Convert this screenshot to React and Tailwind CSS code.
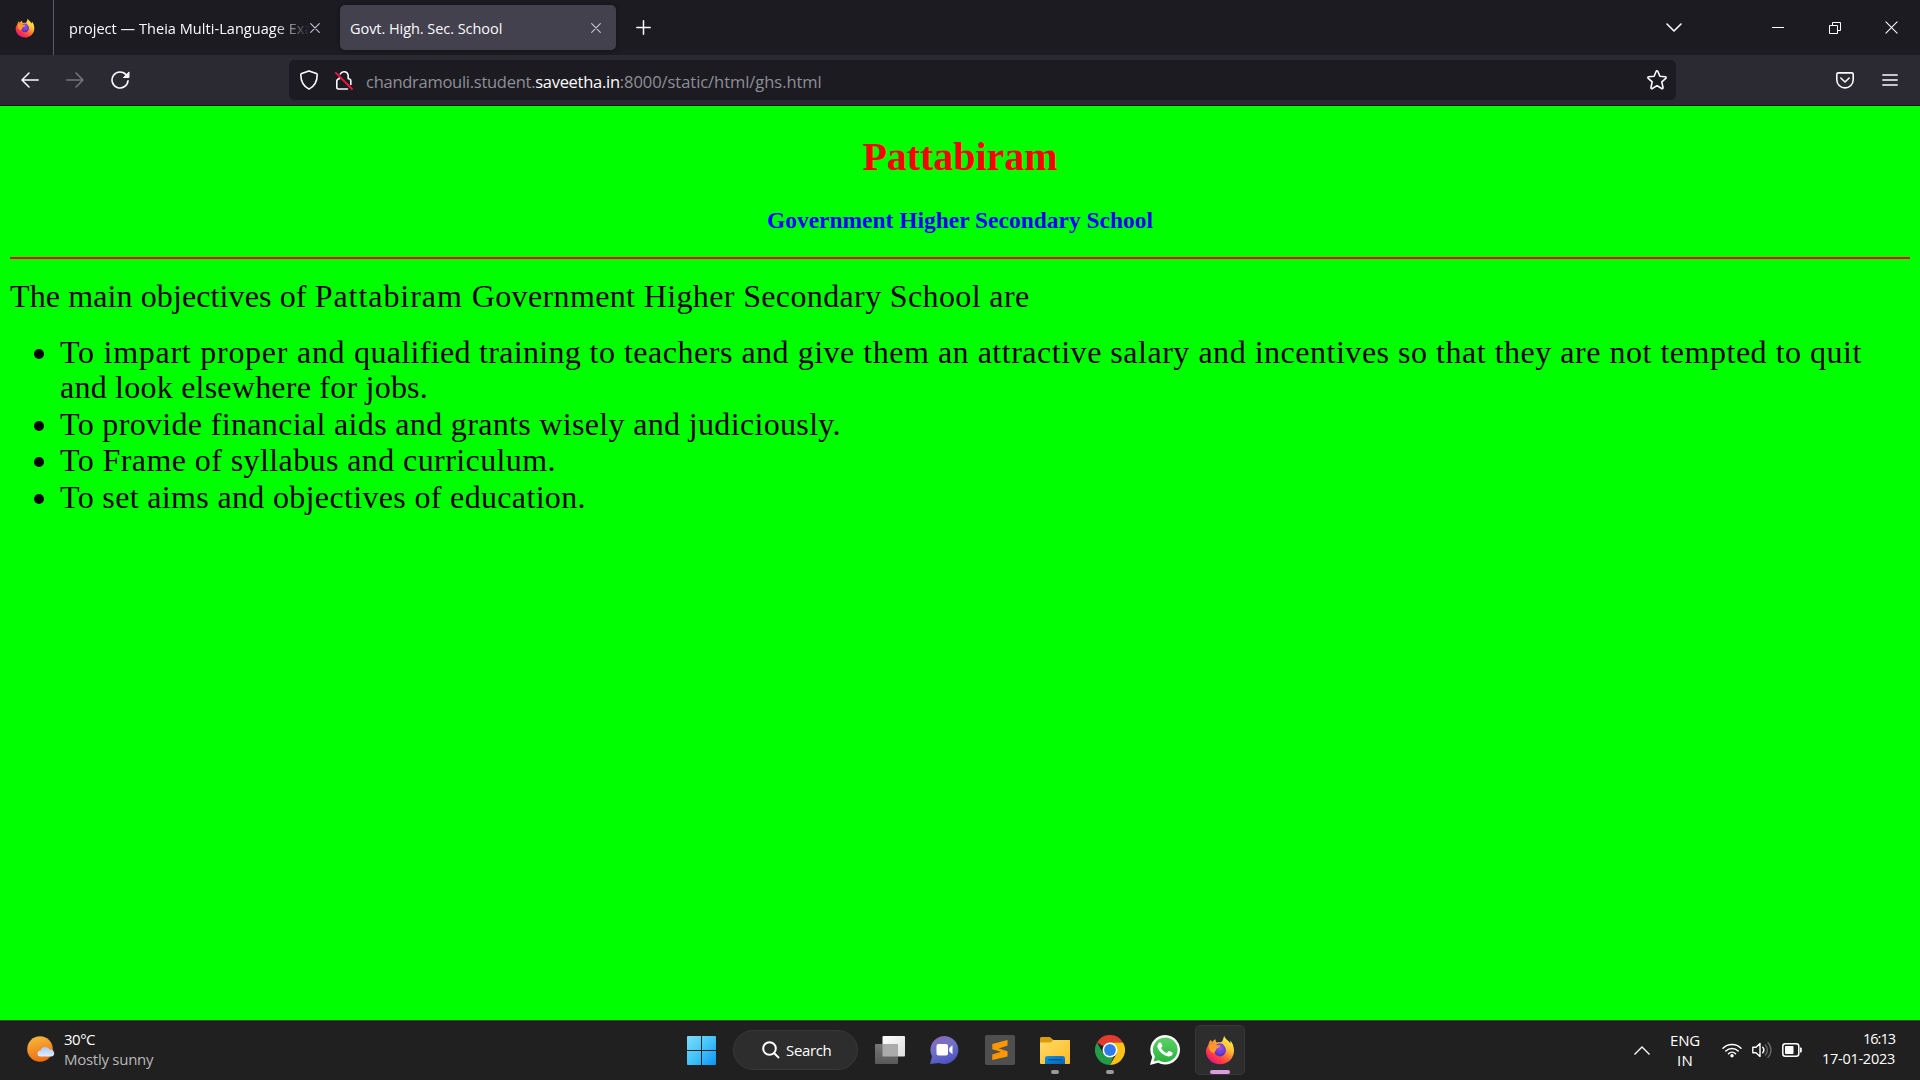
function Firefox({ className, id }) {
  return (
    <svg viewBox="0 0 30 30" className={className}>
      <defs>
        <linearGradient id={id + "a"} x1="0.85" y1="0.1" x2="0.25" y2="0.95">
          <stop offset="0" stopColor="#fff44f" />
          <stop offset="0.3" stopColor="#ffc233" />
          <stop offset="0.55" stopColor="#ff7139" />
          <stop offset="0.8" stopColor="#ff3647" />
          <stop offset="1" stopColor="#e31587" />
        </linearGradient>
        <radialGradient id={id + "b"} cx="0.5" cy="0.35" r="0.65">
          <stop offset="0" stopColor="#a74be8" />
          <stop offset="0.6" stopColor="#6e3fd8" />
          <stop offset="1" stopColor="#4a2fae" />
        </radialGradient>
      </defs>
      <path d="M19.2 0.8c-1 2.400-0.900 4.200-2.300 5.900-1.200 0.600-3.200 0.200-5.100 0.900-1-0.800-1.400-2-1.200-3.400-1.500 0.600-2.500 1.600-3.300 2.700-0.700-0.300-1.100-0.800-1.300-2.100-1.900 1.400-2.400 3.400-2.600 5.400C1.800 12.300 1 14.200 1 16.200 1 23.500 7.300 29.300 15 29.300s14-5.900 14-13.600c0-4.800-1.800-8.400-3.800-10.300 0.300 1.200 0.300 2.100 0.100 3C23.500 5 20 4.400 19.200 0.800z" fill={"url(#" + id + "a)"} />
      <ellipse cx="15" cy="14.800" rx="6" ry="6.600" fill={"url(#" + id + "b)"} />
      <path d="M3.500 10c2.400-1.400 5-1.300 7.300 0.200 1.800 0 3.400 0.100 4.600 0.400 0 1.500-2 2.200-3.900 3.100-0.300 1.800-1.700 2.300-2.500 4.800C5 17 3.500 13 3.500 10z" fill="#ff9a2a" />
      <path d="M18 7.500c3.800 1.800 4.800 5.300 3.800 8.800-0.300-2.500-1.300-4.500-3-6z" fill="#ffcf3c" />
    </svg>
  );
}

function Cross({ size, color, w = 1.2 }) {
  return (
    <svg className="shrink-0" width={size} height={size} viewBox="0 0 10 10" fill="none" stroke={color} strokeWidth={w} strokeLinecap="round">
      <path d="M0.700 0.700l8.600 8.600M9.300 0.700l-8.600 8.600" />
    </svg>
  );
}

function TabStrip() {
  return (
    <div className="flex h-[55px] items-center bg-[#1c1b22]">
      <div className="flex h-full w-[54px] shrink-0 items-center border-r border-[#5b5b66] pl-[15px]">
        <Firefox className="h-5 w-5" id="ft" />
      </div>
      <div className="flex w-[286px] shrink-0 items-center pl-[15px] text-[14.5px] text-[#fbfbfe]">
        <div className="w-[241px] overflow-hidden whitespace-nowrap pt-[2px] tracking-[0.05px] [mask-image:linear-gradient(to_right,black_205px,transparent_241px)]">
          project — Theia Multi-Language Exa
        </div>
        <Cross size={10} color="#c8c8ce" w={1.1} />
      </div>
      <div className="flex h-[45px] w-[276px] shrink-0 items-center justify-between rounded-[5px] bg-[#42414d] pl-[10px] pr-[15px] text-[14.5px] text-[#fbfbfe] shadow-[0_0_4px_rgba(0,0,0,0.4)]">
        <span className="pt-[2px] tracking-[-0.05px]">Govt. High. Sec. School</span>
        <Cross size={10} color="#c8c8ce" w={1.1} />
      </div>
      <svg className="ml-5" width="15" height="15" viewBox="0 0 15 15" stroke="#fbfbfe" strokeWidth="1.500" strokeLinecap="round">
        <path d="M0.750 7.500h13.500M7.500 0.750v13.500" />
      </svg>
      <div className="ml-auto flex items-center pr-[22px]">
        <svg className="mr-[90px]" width="16" height="9" viewBox="0 0 16 9" fill="none" stroke="#fbfbfe" strokeWidth="1.600" strokeLinecap="round" strokeLinejoin="round">
          <path d="M1 1l7 7 7-7" />
        </svg>
        <div className="mr-[45px] h-px w-3 bg-white" />
        <svg className="mr-[44px]" width="12" height="12" viewBox="0 0 12 12" fill="none" stroke="#fff">
          <path d="M0.500 3.500h8v8h-8zM3.500 3.500v-3h8v8h-3" />
        </svg>
        <Cross size={13} color="#fff" w={0.8} />
      </div>
    </div>
  );
}

function NavBar() {
  return (
    <div className="flex h-[51px] items-center border-b border-[#0c0c0d] bg-[#2b2a33]">
      <svg className="ml-[21px]" width="18" height="16" viewBox="0 0 18 16" fill="none" stroke="#fbfbfe" strokeWidth="1.500" strokeLinecap="round" strokeLinejoin="round">
        <path d="M17.200 8H1M8 1L1 8l7 7" />
      </svg>
      <svg className="ml-[27px]" width="18" height="16" viewBox="0 0 18 16" fill="none" stroke="#76757c" strokeWidth="1.500" strokeLinecap="round" strokeLinejoin="round">
        <path d="M0.800 8H17M10 1l7 7-7 7" />
      </svg>
      <svg className="ml-[27px]" width="19" height="19" viewBox="0 0 19 19" fill="none" stroke="#fbfbfe" strokeWidth="1.600" strokeLinecap="round">
        <path d="M15.300 4A8 8 0 1 0 17 9.800" />
        <path d="M18 1.300v5.200h-5.200z" fill="#fbfbfe" strokeWidth="1" strokeLinejoin="round" />
      </svg>
      <div className="ml-[159px] flex h-10 w-[1387px] shrink-0 items-center rounded-[5px] bg-[#1c1b22] pl-[11px] pr-[9px]">
        <svg width="18" height="20" viewBox="0 0 18 20" fill="none" stroke="#fbfbfe" strokeWidth="1.600" strokeLinejoin="round">
          <path d="M9 0.900L16.400 3.600c0.500 0.200 0.800 0.500 0.800 1.100 0 6.300-2.300 11.300-8.200 14.400C3.100 16 0.800 11 0.800 4.700c0-0.600 0.300-0.900 0.800-1.100z" />
        </svg>
        <svg className="ml-[17px]" width="18" height="20" viewBox="0 0 18 20" fill="none" stroke="#fbfbfe" strokeWidth="1.600" strokeLinecap="round" strokeLinejoin="round">
          <path d="M5.300 4A4.200 4.200 0 0 1 13.200 5.500V8.800c1.500 0 2.600 0.700 2.600 2.200v3.500M12.500 19H3.500c-1.100 0-1.700-0.600-1.700-1.700v-6c0-1.500 0.900-2.300 2.700-2.500V7.500" />
          <path d="M0.900 2.800L17 19" stroke="#f5123f" strokeWidth="1.900" />
        </svg>
        <div className="ml-[13px] flex whitespace-nowrap pt-[5px] text-[16.5px] text-[#8f8f96]">
          <span className="tracking-[-0.27px]">chandramouli.student.</span>
          <span className="tracking-[-0.28px] text-[#fbfbfe]">saveetha.in</span>
          <span className="tracking-[-0.05px]">:8000/static/html/ghs.html</span>
        </div>
        <svg className="ml-auto" width="20" height="20" viewBox="0 0 20 20" fill="none" stroke="#fbfbfe" strokeWidth="1.600" strokeLinejoin="round">
          <path d="M9.100 1.500c0.400-0.800 1.400-0.800 1.800 0l2 4.700 5.300 0.500c0.900 0.100 1.200 1 0.600 1.600l-4 3.600 1.200 5.600c0.200 0.900-0.600 1.400-1.400 1L10 15.600l-4.600 2.900c-0.800 0.400-1.600-0.100-1.400-1l1.200-5.600-4-3.600C0.600 7.700 0.900 6.800 1.800 6.700l5.300-0.500z" />
        </svg>
      </div>
      <svg className="ml-[160px]" width="18" height="17" viewBox="0 0 18 17" fill="none" stroke="#fbfbfe" strokeWidth="1.600" strokeLinecap="round" strokeLinejoin="round">
        <path d="M2.300 0.900h13.400c0.900 0 1.500 0.600 1.500 1.500v5.300a8.200 8.200 0 0 1-16.400 0V2.400c0-0.900 0.600-1.500 1.500-1.500z" />
        <path d="M4.800 6L9 10l4.200-4" />
      </svg>
      <svg className="ml-7" width="16" height="12" viewBox="0 0 16 12" stroke="#fbfbfe" strokeWidth="1.400" strokeLinecap="round">
        <path d="M0.800 1h14.400M0.800 6h14.400M0.800 11h14.400" />
      </svg>
    </div>
  );
}

function Item({ children, className }) {
  return (
    <li className={"flex " + className}>
      <span className="ml-[34px] mr-[16px] mt-[14px] h-[10px] w-[10px] shrink-0 rounded-full bg-black" />
      <div>{children}</div>
    </li>
  );
}

function Page() {
  return (
    <main className="h-[914px] overflow-hidden bg-[#00ff00] font-['Liberation_Serif',serif] text-black">
      <h1 className="mt-[28px] text-center text-[40px] font-bold leading-[46px] tracking-[-0.05px] text-[#ff0000]">Pattabiram</h1>
      <h3 className="mt-[27px] text-center text-[23.4px] font-bold leading-[27px] tracking-[0.034px] text-[#0000ff]">Government Higher Secondary School</h3>
      <div className="mx-[10px] mt-[23px] h-[2px] bg-[#ff0000]" />
      <div className="whitespace-nowrap text-[32px] leading-[34px]">
        <p className="ml-[10px] mt-[20px] tracking-[0.366px]">
          <span className="tracking-[0.11px]">The main objectives of </span>
          <span className="tracking-[0.95px]">Pattabiram </span>
          Government Higher Secondary School are
        </p>
        <ul className="mt-[22px]">
          <Item className="h-[72px]">
            <div className="tracking-[0.517px]">
              <span className="tracking-[0.74px]">To impart proper and </span>
              <span className="tracking-[0.32px]">qualified training </span>
              to teachers and give them an attractive salary and incentives so that they are not tempted to quit
            </div>
            <div className="mt-px tracking-[0.227px]">and look elsewhere for jobs.</div>
          </Item>
          <Item className="h-[36px] tracking-[0.335px]">To provide financial aids and grants wisely and judiciously.</Item>
          <Item className="h-[37px] tracking-[0.41px]">To Frame of syllabus and curriculum.</Item>
          <Item className="h-[37px] tracking-[0.34px]">To set aims and objectives of education.</Item>
        </ul>
      </div>
    </main>
  );
}

function Cell({ children, dot }) {
  return (
    <div className="relative flex h-[60px] w-[55px] items-center justify-center">
      {children}
      {dot && <div className="absolute bottom-[6px] h-1 w-2 rounded-full bg-[#9a9a9a]" />}
    </div>
  );
}

function Taskbar() {
  return (
    <footer className="flex h-[60px] items-center bg-[#202020] text-[15px] leading-5 text-white shadow-[inset_0_1px_0_#444]">
      <div className="flex w-[674px] shrink-0 items-center pl-[27px]">
        <svg width="28" height="28" viewBox="0 0 28 28">
          <defs>
            <linearGradient id="sun" x1="0.300" y1="0" x2="0.600" y2="1">
              <stop offset="0" stopColor="#f6b73c" />
              <stop offset="1" stopColor="#ee6a10" />
            </linearGradient>
            <linearGradient id="cloud" x1="0" y1="0" x2="0" y2="1">
              <stop offset="0" stopColor="#a9c8fa" />
              <stop offset="1" stopColor="#e3ecfc" />
            </linearGradient>
          </defs>
          <circle cx="13" cy="13" r="12.800" fill="url(#sun)" />
          <path d="M13.500 20.500a3 3 0 0 1 0-6 5 5 0 0 1 9.300-0.800A3.500 3.500 0 0 1 24.500 20.500z" fill="url(#cloud)" />
        </svg>
        <div className="mb-[2px] ml-[9px]">
          <div className="tracking-[-0.5px]">30°C</div>
          <div className="tracking-[-0.27px] text-[#b8b8b8]">Mostly sunny</div>
        </div>
      </div>
      <Cell>
        <svg width="29" height="29" viewBox="0 0 29 29">
          <defs>
            <linearGradient id="win" gradientUnits="userSpaceOnUse" x1="0" y1="0" x2="29" y2="29">
              <stop offset="0" stopColor="#7fdcfb" />
              <stop offset="0.500" stopColor="#43c3fa" />
              <stop offset="1" stopColor="#0e92f6" />
            </linearGradient>
          </defs>
          <path fill="url(#win)" d="M1 0h13v14H0V1a1 1 0 0 1 1-1zM15 0h13a1 1 0 0 1 1 1v13H15zM0 15h14v14H1a1 1 0 0 1-1-1zM15 15h14v13a1 1 0 0 1-1 1H15z" />
        </svg>
      </Cell>
      <div className="ml-1 mr-1 flex h-10 w-[125px] items-center rounded-full border border-[#383838] bg-[#2d2d2d] pl-[28px]">
        <svg width="18" height="18" viewBox="0 0 18 18" fill="none" stroke="#fff" strokeWidth="2">
          <circle cx="7.500" cy="7.500" r="6.300" />
          <path d="M12 12l5 5" />
        </svg>
        <span className="ml-[6px] tracking-[-0.35px]">Search</span>
      </div>
      <Cell>
        <svg width="30" height="28" viewBox="0 0 30 28">
          <defs>
            <linearGradient id="tv" x1="0" y1="0" x2="1" y2="1"><stop offset="0" stopColor="#fff" /><stop offset="1" stopColor="#dcdcdc" /></linearGradient>
            <linearGradient id="tv2" x1="0" y1="0" x2="0" y2="1"><stop offset="0" stopColor="#777" /><stop offset="1" stopColor="#585858" /></linearGradient>
          </defs>
          <rect x="7.500" y="0" width="22.500" height="20.500" rx="1" fill="url(#tv)" />
          <rect x="0" y="8" width="23" height="20" rx="1" fill="url(#tv2)" />
          <rect x="7.500" y="8" width="15.500" height="12.500" fill="#ababab" />
        </svg>
      </Cell>
      <Cell>
        <svg width="29" height="28" viewBox="0 0 29 28">
          <defs>
            <linearGradient id="chat" x1="0.200" y1="0" x2="0.600" y2="1"><stop offset="0" stopColor="#8c68b4" /><stop offset="0.450" stopColor="#7072c8" /><stop offset="1" stopColor="#4c50c0" /></linearGradient>
          </defs>
          <path d="M14.700 0a14 14 0 1 1-5.600 27L0 28l2-7.500A14 14 0 0 1 14.700 0z" fill="url(#chat)" />
          <rect x="6.500" y="8" width="11.500" height="11.500" rx="2" fill="#fff" />
          <path d="M19.300 12l3.200-2.700v9l-3.200-2.700z" fill="#fff" />
        </svg>
      </Cell>
      <Cell>
        <svg width="30" height="30" viewBox="0 0 30 30">
          <rect width="30" height="30" rx="2" fill="#4f4f4f" />
          <path d="M22.500 5v5.500l-8.800 2.900 8.800 2.800v5.300L7.300 25v-5.500l8.700-2.700-8.700-2.600V9z" fill="#ff9800" />
        </svg>
      </Cell>
      <Cell dot>
        <svg width="30" height="27" viewBox="0 0 30 27">
          <defs>
            <linearGradient id="fold" x1="0" y1="0" x2="1" y2="1"><stop offset="0" stopColor="#ffd968" /><stop offset="1" stopColor="#fcbc23" /></linearGradient>
            <linearGradient id="tray" x1="0" y1="0" x2="1" y2="1"><stop offset="0" stopColor="#1490df" /><stop offset="1" stopColor="#0563b8" /></linearGradient>
          </defs>
          <path d="M0 1.500A1.500 1.500 0 0 1 1.500 0h8.300l3.700 3H29a1 1 0 0 1 1 1v5H0z" fill="#dd9b0c" />
          <path d="M0 5.500h10.500l3-2.500H29a1 1 0 0 1 1 1v22a1 1 0 0 1-1 1H1a1 1 0 0 1-1-1z" fill="url(#fold)" />
          <path d="M5 27v-5.500A2.500 2.500 0 0 1 7.500 19h15a2.500 2.500 0 0 1 2.500 2.500V27z" fill="url(#tray)" />
          <path d="M8.500 22.700h13" stroke="#0a4a86" strokeWidth="1.200" />
        </svg>
      </Cell>
      <Cell dot>
        <svg width="30" height="30" viewBox="0 0 30 30">
          <path d="M15 15L2 7.500A15 15 0 0 1 28 7.500H15z" fill="#e33b2e" />
          <path d="M15 7.500h13A15 15 0 0 1 15 30l6.500-11.200z" fill="#fbc116" />
          <path d="M2 7.500L8.500 18.800 15 22.500l3.500-0.500L15 30A15 15 0 0 1 2 7.500z" fill="#229c48" />
          <circle cx="15" cy="15" r="7.500" fill="#fff" />
          <circle cx="15" cy="15" r="5.900" fill="#2f7bee" />
        </svg>
      </Cell>
      <Cell>
        <svg width="30" height="30" viewBox="0 0 30 30">
          <defs><linearGradient id="wa" x1="0" y1="0" x2="0" y2="1"><stop offset="0" stopColor="#5fd066" /><stop offset="1" stopColor="#27b43e" /></linearGradient></defs>
          <path d="M15.100 0a14.800 14.800 0 1 1-7 27.800L0 30l2.200-7.900A14.800 14.800 0 0 1 15.100 0z" fill="#fff" />
          <path d="M15.200 2.500a12.300 12.300 0 1 1-6.500 22.700L3.600 26.500l1.400-4.900A12.300 12.300 0 0 1 15.200 2.500z" fill="url(#wa)" />
          <path d="M11.300 8.300c-0.300-0.700-0.600-0.800-1.100-0.800-0.500 0-1 0.100-1.400 0.600C8.200 8.700 7.400 9.500 7.400 11.200c0 1.700 1.200 3.300 1.500 3.700 0.200 0.300 2.600 4 6.400 5.500 3.200 1.200 3.900 1 4.600 0.900 0.700-0.100 2.200-0.900 2.500-1.800 0.300-0.900 0.300-1.600 0.200-1.800-0.100-0.200-0.300-0.300-0.700-0.500l-2.600-1.200c-0.400-0.100-0.700-0.200-1 0.200l-1.200 1.500c-0.200 0.200-0.400 0.300-0.800 0.100-0.400-0.200-1.600-0.600-3-1.900-1.100-1-1.900-2.200-2.100-2.600-0.200-0.400 0-0.600 0.200-0.800l1-1.300c0.100-0.200 0.100-0.400 0-0.700z" fill="#fff" />
        </svg>
      </Cell>
      <div className="relative ml-[3px] flex h-[50px] w-[50px] items-center justify-center rounded-[5px] border border-[#383838] bg-[#2d2d2d]">
        <Firefox className="h-[30px] w-[30px]" id="fb" />
        <div className="absolute bottom-0 h-1 w-5 rounded-full bg-[#d99ce0]" />
      </div>
      <div className="ml-auto flex items-center pr-[25px]">
        <svg width="16" height="9" viewBox="0 0 16 9" fill="none" stroke="#fff" strokeWidth="1.300"><path d="M0.500 8.500L8 1l7.500 7.500" /></svg>
        <div className="ml-[20px] w-[30px] text-center">
          <div className="tracking-[-0.2px]">ENG</div>
          <div className="tracking-[0.2px]">IN</div>
        </div>
        <svg className="ml-[22px]" width="20" height="16" viewBox="0 0 20 16" fill="none" stroke="#fff" strokeWidth="1.500" strokeLinecap="round">
          <path d="M1 6.200a12.800 12.800 0 0 1 18 0M3.800 9a8.800 8.800 0 0 1 12.400 0M6.500 11.700a5 5 0 0 1 7 0" />
          <circle cx="10" cy="13.700" r="1.700" fill="#fff" stroke="none" />
        </svg>
        <svg className="ml-[10px]" width="20" height="18" viewBox="0 0 20 18" fill="none" stroke="#fff" strokeWidth="1.400" strokeLinecap="round" strokeLinejoin="round">
          <path d="M0.800 6.300h3.200L8 2.500v13L4 11.700H0.800zM10.700 6.300a4 4 0 0 1 0 5.400" />
          <path d="M13.300 4a7 7 0 0 1 0 10M16 1.700a10.500 10.500 0 0 1 0 14.600" stroke="#666" />
        </svg>
        <svg className="ml-[10px]" width="20" height="14" viewBox="0 0 20 14">
          <rect x="0.800" y="0.800" width="16" height="12.400" rx="2.500" fill="none" stroke="#fff" strokeWidth="1.500" />
          <rect x="3" y="3" width="8.500" height="8" rx="0.800" fill="#fff" />
          <path d="M18 4.500h0.800a1 1 0 0 1 1 1v3a1 1 0 0 1-1 1H18z" fill="#fff" />
        </svg>
        <div className="mb-[2px] ml-[19px] w-[74px] whitespace-nowrap text-right text-[14.5px]">
          <div className="tracking-[-1px]">16:13</div>
          <div className="tracking-[-0.26px]">17-01-2023</div>
        </div>
      </div>
    </footer>
  );
}

export default function App() {
  return (
    <div className="h-[1080px] w-[1920px] overflow-hidden font-['Open_Sans','Noto_Sans',sans-serif]">
      <TabStrip />
      <NavBar />
      <Page />
      <Taskbar />
    </div>
  );
}
